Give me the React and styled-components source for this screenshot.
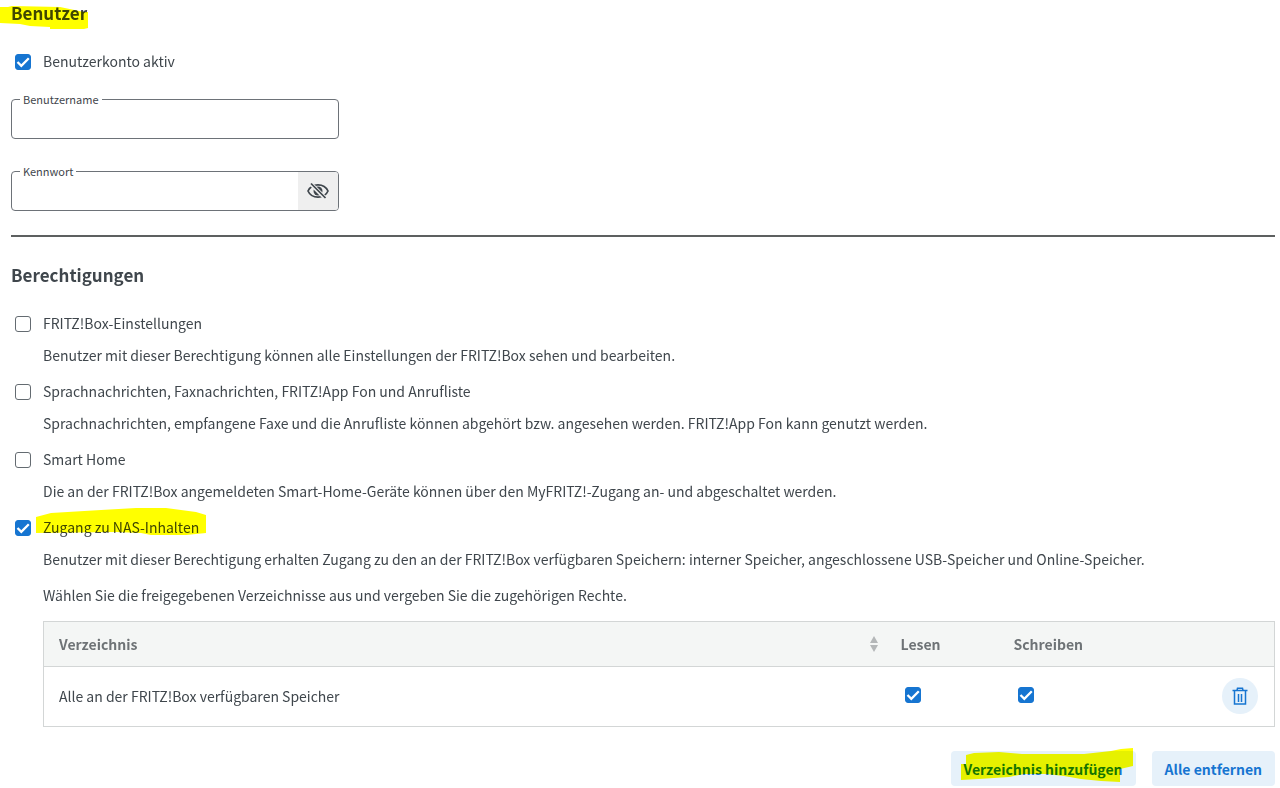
import React from "react";
import styled, { createGlobalStyle } from "styled-components";

const Global = createGlobalStyle`
  *, *::before, *::after { box-sizing: border-box; }
  body {
    margin: 0;
    background: #fff;
    color: #3f464c;
    font: 400 14px/22px "Noto Sans CJK SC", "Open Sans", sans-serif;
  }
  button, input { font: inherit; color: inherit; }
`;

const Page = styled.main`
  padding: 0 5px 0 11px;
`;

const Heading = styled.h2`
  position: relative;
  margin: 0 0 24px;
  font-size: 17px;
  line-height: 26px;
  font-weight: 700;
`;

const Marker = styled.svg`
  position: absolute;
  left: ${(p) => p.$left}px;
  top: ${(p) => p.$top}px;
  fill: #ff0;
  mix-blend-mode: multiply;
  pointer-events: none;
`;

const Box = styled.input`
  appearance: none;
  display: block;
  flex: none;
  width: 16px;
  height: 16px;
  margin: 0;
  border: 1px solid #646b71;
  border-radius: 3px;
  background: #fff;
  &:checked {
    border-color: #1675d1;
    background: #1675d1 url("data:image/svg+xml,%3Csvg xmlns='http://www.w3.org/2000/svg' viewBox='0 0 16 16'%3E%3Cpath d='M2.500 8l3.800 3.800L13.800 4.200' fill='none' stroke='white' stroke-width='2.300'/%3E%3C/svg%3E") center / 16px 16px no-repeat border-box;
  }
`;

const Check = styled.label`
  position: relative;
  display: flex;
  align-items: center;
  width: fit-content;
  gap: 12px;
  padding: 0 0 2px 4px;
  ${Box} { margin-top: 2px; }
`;

const Fields = styled.div`
  display: flex;
  flex-direction: column;
  gap: 32px;
  margin: 25px 0 24px;
  max-width: 328px;
`;

const Field = styled.div`
  position: relative;
  display: flex;
  height: 40px;
  border: 1px solid #6d7278;
  border-radius: 4px;
`;

const FieldLabel = styled.label`
  position: absolute;
  top: -9px;
  left: 8px;
  padding: 0 3px;
  background: #fff;
  font-size: 11px;
  line-height: 16px;
`;

const TextInput = styled.input`
  flex: 1;
  min-width: 0;
  padding: 0 12px;
  border: 0;
  border-radius: 3px;
  background: transparent;
`;

const Reveal = styled.button`
  display: grid;
  place-items: center;
  width: 40px;
  padding: 0;
  border: 0;
  border-radius: 0 3px 3px 0;
  background: #efefef;
`;

const Rule = styled.hr`
  height: 2px;
  margin: 0 0 25px;
  border: 0;
  background: #5d6060;
`;

const Permissions = styled.div`
  display: flex;
  flex-direction: column;
  gap: 12px;
`;

const Text = styled.p`
  margin: ${(p) => (p.$below ? "8px" : "12px")} 0 0 32px;
  padding-bottom: 2px;
`;

const Details = styled.div`
  margin: 13px 0 0 32px;
`;

const Table = styled.table`
  width: 100%;
  table-layout: fixed;
  border-collapse: collapse;
  border: 1px solid #d3d6d6;
`;

const Th = styled.th`
  width: ${(p) => p.$width || "auto"};
  height: 45px;
  padding: 0 8px 0 15px;
  background: #f4f6f5;
  border-bottom: 1px solid #d3d6d6;
  color: #6e7376;
  font-weight: 700;
  text-align: left;
`;

const Td = styled.td`
  height: 60px;
  padding: 0 16px 2px 15px;
  ${Box} { margin: 0 0 2px 4px; }
`;

const Sortable = styled.span`
  display: flex;
  align-items: center;
  justify-content: space-between;
`;

const Trash = styled.button`
  display: grid;
  place-items: center;
  width: 36px;
  height: 36px;
  margin-left: auto;
  padding: 0;
  border: 0;
  border-radius: 50%;
  background: #e6f1fa;
  color: #1675d1;
`;

const Actions = styled.div`
  display: flex;
  justify-content: flex-end;
  gap: 16px;
  margin-top: 24px;
`;

const Button = styled.button`
  position: relative;
  height: 35px;
  padding: 0 13px;
  border: 0;
  border-radius: 4px;
  background: #e6f1fa;
  color: #1675d1;
  font-weight: 700;
`;

const permissions = [
  ["FRITZ!Box-Einstellungen", "Benutzer mit dieser Berechtigung können alle Einstellungen der FRITZ!Box sehen und bearbeiten."],
  ["Sprachnachrichten, Faxnachrichten, FRITZ!App Fon und Anrufliste", "Sprachnachrichten, empfangene Faxe und die Anrufliste können abgehört bzw. angesehen werden. FRITZ!App Fon kann genutzt werden."],
  ["Smart Home", "Die an der FRITZ!Box angemeldeten Smart-Home-Geräte können über den MyFRITZ!-Zugang an- und abgeschaltet werden."],
];

export default function App() {
  return (
    <Page>
      <Global />
      <Heading>
        Benutzer
        <Marker $left={-11} $top={0} width="90" height="30">
          <path d="M0 7H8L12 6L60 7L84 12H88V28L84 29H50V27L30 26L20 24L0 23Z" />
        </Marker>
      </Heading>
      <Check>
        <Box type="checkbox" defaultChecked />
        Benutzerkonto aktiv
      </Check>
      <Fields>
        <Field>
          <FieldLabel htmlFor="name">Benutzername</FieldLabel>
          <TextInput id="name" type="text" />
        </Field>
        <Field>
          <FieldLabel htmlFor="password">Kennwort</FieldLabel>
          <TextInput id="password" type="password" />
          <Reveal type="button" aria-label="Kennwort anzeigen">
            <svg width="22" height="18" viewBox="0 0 22 18" fill="none" stroke="#3f464c" strokeWidth="1.7">
              <path d="M1 9C3 4.500 7 2.800 11 2.800S19 4.500 21 9C19 13.500 15 15.200 11 15.200S3 13.500 1 9Z" />
              <circle cx="11" cy="9" r="4.500" fill="#3f464c" stroke="none" />
              <path d="M4 2L18.500 16.500" stroke="#efefef" strokeWidth="4" />
              <path d="M4 1.500L18.500 16" />
            </svg>
          </Reveal>
        </Field>
      </Fields>
      <Rule />
      <Heading>Berechtigungen</Heading>
      <Permissions>
        {permissions.map(([label, text]) => (
          <div key={label}>
            <Check>
              <Box type="checkbox" />
              {label}
            </Check>
            <Text $below>{text}</Text>
          </div>
        ))}
        <div>
          <Check>
            <Box type="checkbox" defaultChecked />
            Zugang zu NAS-Inhalten
            <Marker $left={25} $top={-9} width="171" height="30">
              <path d="M0 10L15 6L65 3L100 1L130 1L160 5L170 8V26L150 28H115L105 26L80 25L0 26Z" />
            </Marker>
          </Check>
          <Text $below>
            Benutzer mit dieser Berechtigung erhalten Zugang zu den an der FRITZ!Box verfügbaren Speichern: interner Speicher, angeschlossene USB-Speicher und Online-Speicher.
          </Text>
          <Text>Wählen Sie die freigegebenen Verzeichnisse aus und vergeben Sie die zugehörigen Rechte.</Text>
          <Details>
            <Table>
              <thead>
                <tr>
                  <Th>
                    <Sortable>
                      Verzeichnis
                      <svg width="8" height="16" viewBox="0 0 8 16" fill="#b4b7b8">
                        <path d="M4 0L8 7H0ZM0 9H8L4 16Z" />
                      </svg>
                    </Sortable>
                  </Th>
                  <Th $width="113px">Lesen</Th>
                  <Th $width="113px">Schreiben</Th>
                  <Th $width="163px" aria-label="Aktionen" />
                </tr>
              </thead>
              <tbody>
                <tr>
                  <Td>Alle an der FRITZ!Box verfügbaren Speicher</Td>
                  <Td><Box type="checkbox" defaultChecked aria-label="Lesen" /></Td>
                  <Td><Box type="checkbox" defaultChecked aria-label="Schreiben" /></Td>
                  <Td>
                    <Trash type="button" aria-label="Entfernen">
                      <svg width="16" height="18" viewBox="0 0 16 18" fill="none" stroke="currentColor" strokeWidth="1.500">
                        <path d="M0.500 3.500H15.500M5 3.500L5.500 1.200H10.500L11 3.500M2.500 3.500V17H13.500V3.500M6.500 7V15M9.500 7V15" />
                      </svg>
                    </Trash>
                  </Td>
                </tr>
              </tbody>
            </Table>
            <Actions>
              <Button type="button">
                Verzeichnis hinzufügen
                <Marker $left={10} $top={-3} width="173" height="36">
                  <path d="M0 16H5V7L13 5L38 4L61 6H123L150 3L160 1L172 0V18L159 21V34L140 33L120 31L103 28L85 26H63L48 29L18 31L0 32Z" />
                </Marker>
              </Button>
              <Button type="button">Alle entfernen</Button>
            </Actions>
          </Details>
        </div>
      </Permissions>
    </Page>
  );
}
